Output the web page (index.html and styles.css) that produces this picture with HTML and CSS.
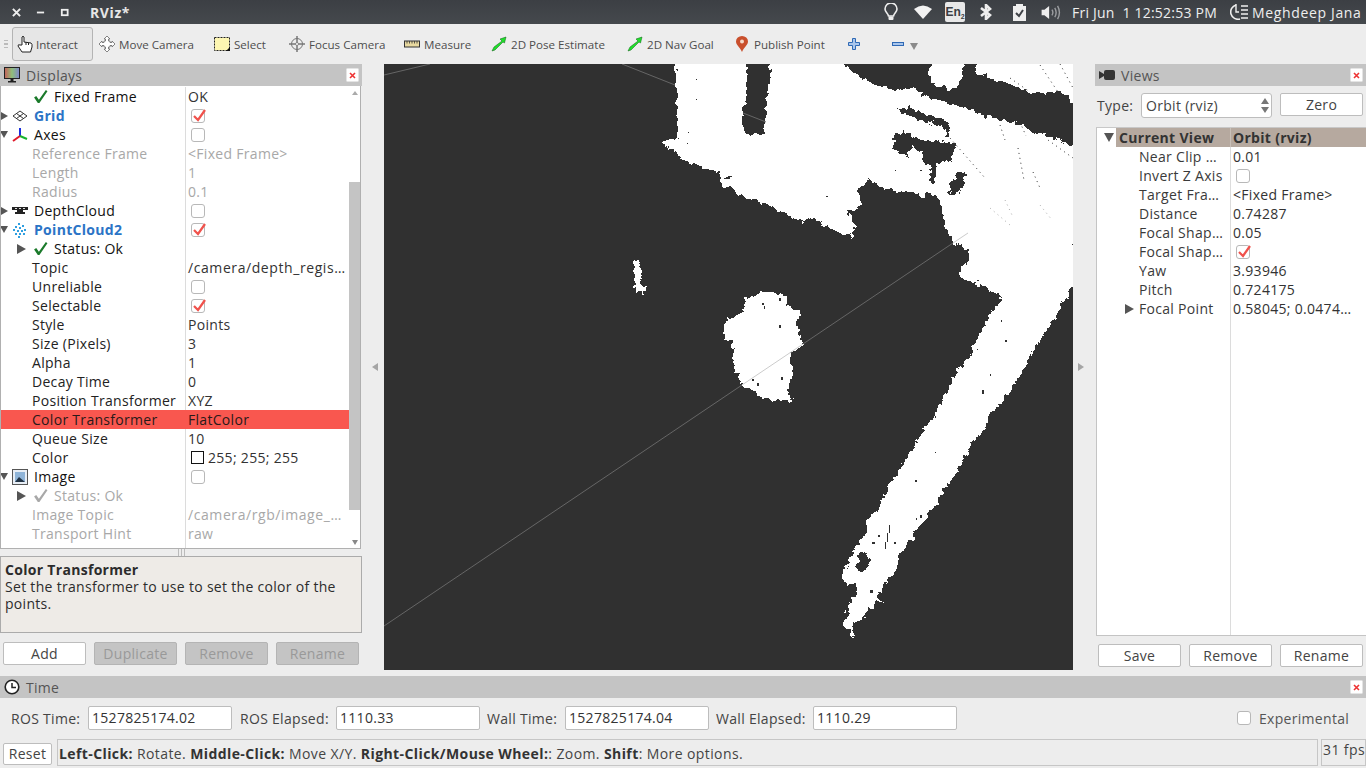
FILE: index.html
```html
<!DOCTYPE html>
<html lang="en">
<head>
<meta charset="utf-8">
<title>RViz*</title>
<link rel="stylesheet" href="styles.css">
</head>
<body>
<svg class="defs" aria-hidden="true">
  <symbol id="check" viewBox="0 0 14 14"><path d="M1 8 L3 6.5 L5.5 10 L12 1 L13.5 2 L6 13 L4.5 13 Z" fill="currentColor"/></symbol>
  <symbol id="redcheck" viewBox="0 0 14 14"><path d="M2 7 L6 11 L13 1" fill="none" stroke="#f0524c" stroke-width="2.2"/></symbol>
  <symbol id="arrow2" viewBox="0 0 16 16"><path d="M1 15 L3 11 L11 5 L9 3 L15 1 L13.5 7 L12 6 L4 14 Z" fill="#1fe02a" stroke="#0c5f14" stroke-width=".5"/></symbol>
  <symbol id="closex" viewBox="0 0 13 14"><rect x=".5" y=".5" width="12" height="13" rx="1" fill="#fff" stroke="#e4e4e4"/><path d="M4 5 L9 10 M9 5 L4 10" stroke="#e33" stroke-width="1.6"/></symbol>
</svg>

<header class="topbar">
  <div class="wm">
    <svg class="wm-i" viewBox="0 0 10 10"><path d="M1 1 L9 9 M9 1 L1 9" stroke="#eee" stroke-width="2.2"/></svg>
    <svg class="wm-i" viewBox="0 0 10 10"><path d="M1 5 H9" stroke="#eee" stroke-width="2"/></svg>
    <svg class="wm-i" viewBox="0 0 10 10"><rect x="2" y="2" width="6.500" height="6" fill="none" stroke="#eee" stroke-width="2"/></svg>
  </div>
  <div class="app-title">RViz*</div>
  <div class="tray">
    <svg class="t-bulb" viewBox="0 0 14 18"><path d="M4.500 13 C4 10 1 9 1 6 A6 6 0 0 1 13 6 C13 9 10 10 9.500 13 Z" fill="none" stroke="#eee" stroke-width="1.600"/><rect x="4.500" y="13.500" width="5" height="3.500" rx="1" fill="#eee"/></svg>
    <svg class="t-wifi" viewBox="0 0 18 14"><path d="M0 4 Q9 -3 18 4 L9 14 Z" fill="#f2f2f2"/></svg>
    <div class="t-en">En<sub>2</sub></div>
    <svg class="t-bt" viewBox="0 0 14 16"><path d="M2 4 L11 11 L7 15 V1 L11 5 L2 12" fill="none" stroke="#eee" stroke-width="2.600"/></svg>
    <svg class="t-clip" viewBox="0 0 13 18"><path d="M0 3 H3 V1 H10 V3 H13 V18 H0 Z" fill="#eee"/><path d="M3 10 L6 13 L10 7" fill="none" stroke="#3f4247" stroke-width="2"/></svg>
    <svg class="t-vol" viewBox="0 0 20 16"><path d="M0 5 H3 L8 1 V15 L3 11 H0 Z" fill="#eee"/><path d="M11 5 Q13 8 11 11 M14 3 Q17 8 14 13 M17 1 Q21 8 17 15" fill="none" stroke="#9b9da0" stroke-width="1.500"/></svg>
    <div class="t-clock">Fri Jun&nbsp;&nbsp;1 12:52:53 PM</div>
    <svg class="t-sess" viewBox="0 0 18 16"><path d="M6 1 A7 7 0 1 0 10 15" fill="none" stroke="#eee" stroke-width="1.600"/><path d="M6 0 V8 H9 M11 2 H18 M11 6 H18 M11 10 H18 M11 14 H18" fill="none" stroke="#eee" stroke-width="1.400"/></svg>
    <div class="t-user">Meghdeep Jana</div>
  </div>
</header>

<nav class="toolbar">
  <div class="grip"></div>
  <div class="tool active">
    <svg class="ti-hand" viewBox="0 0 16 18"><path d="M5 10 V2 Q6 .5 7 2 V7 L14 8 Q15.500 9 15 12 L13.500 17 H5 L1 11 Q1 9 3 10 Z" fill="#fff" stroke="#222" stroke-width="1"/><path d="M9 7 V10 M11.500 8 V10" stroke="#222"/></svg>
    <span>Interact</span>
  </div>
  <div class="tool wide-pad">
    <svg class="ti" viewBox="0 0 16 16"><path d="M8 0 L11 3 H9.500 V5 H11 V6.500 H13 V5 L16 8 L13 11 V9.500 H11 V11 H9.500 V13 H11 L8 16 L5 13 H6.500 V11 H5 V9.500 H3 V11 L0 8 L3 5 V6.500 H5 V5 H6.500 V3 H5 Z" fill="#fff" stroke="#666" stroke-width=".8"/></svg>
    <span>Move Camera</span>
  </div>
  <div class="tool">
    <svg class="ti" viewBox="0 0 16 14"><rect x=".5" y=".5" width="15" height="13" fill="#fdf6b2" stroke="#222" stroke-dasharray="2 1"/><path d="M12 14 L16 10 V14 Z" fill="#111"/></svg>
    <span>Select</span>
  </div>
  <div class="tool wide-pad">
    <svg class="ti" viewBox="0 0 16 16"><circle cx="8" cy="8" r="5.500" fill="#eee" stroke="#777"/><path d="M8 0 V16 M0 8 H16" stroke="#777" stroke-width="1.500"/><circle cx="8" cy="8" r="1.500" fill="#fff" stroke="#777" stroke-width=".8"/></svg>
    <span>Focus Camera</span>
  </div>
  <div class="tool">
    <svg class="ti" viewBox="0 0 16 8"><rect x=".5" y="1" width="15" height="6" fill="#e8d9a0" stroke="#333"/><path d="M3 1 V3.500 M5.500 1 V3.500 M8 1 V3.500 M10.500 1 V3.500 M13 1 V3.500" stroke="#333" stroke-width=".8"/></svg>
    <span>Measure</span>
  </div>
  <div class="tool"><svg class="ti"><use href="#arrow2"/></svg><span>2D Pose Estimate</span></div>
  <div class="tool"><svg class="ti"><use href="#arrow2"/></svg><span>2D Nav Goal</span></div>
  <div class="tool pub">
    <svg class="ti-pin" viewBox="0 0 12 16"><path d="M6 16 C4 11 0 9 0 5.500 A6 5.500 0 0 1 12 5.500 C12 9 8 11 6 16 Z" fill="#c94f2c"/><circle cx="6" cy="5.500" r="2" fill="#f5d9c8"/></svg>
    <span>Publish Point</span>
  </div>
  <div class="tool"><svg class="ti-pm" viewBox="0 0 12 12"><path d="M4.500 .5 H7.500 V4.500 H11.500 V7.500 H7.500 V11.500 H4.500 V7.500 H.5 V4.500 H4.500 Z" fill="#a9c6ec" stroke="#2f69b5"/></svg></div>
  <div class="tool minus">
    <svg class="ti-pm" viewBox="0 0 12 12"><rect x=".5" y="4.500" width="11" height="3" fill="#a9c6ec" stroke="#2f69b5"/></svg>
    <svg class="ti-down" viewBox="0 0 8 8"><path d="M0 1 H8 L4 8 Z" fill="#8a8a8a"/></svg>
  </div>
</nav>

<main class="work">
  <section class="left">
    <div class="dock-title">
      <svg class="di" viewBox="0 0 16 16"><defs><linearGradient id="scr" x1="0" x2="1"><stop offset="0" stop-color="#c8605a"/><stop offset=".5" stop-color="#8fbf7a"/><stop offset="1" stop-color="#7f86cc"/></linearGradient></defs><rect x=".5" y=".5" width="15" height="11" fill="url(#scr)" stroke="#222"/><path d="M6.500 12 H9.500 V14 H12 V15.500 H4 V14 H6.500 Z" fill="#222"/></svg>
      <span class="dock-name">Displays</span>
      <svg class="close"><use href="#closex"/></svg>
    </div>
    <div class="tree">
      <div class="rows">
        <div class="row"><div class="n l1"><svg class="chk ok"><use href="#check"/></svg><span>Fixed Frame</span></div><div class="v">OK</div></div>
        <div class="row"><div class="n l0"><i class="tri r"></i><svg class="ico" viewBox="0 0 16 12"><path d="M8 1 L15 6 L8 11 L1 6 Z M4.500 3.500 L11.500 8.500 M11.500 3.500 L4.500 8.500" fill="#fff" stroke="#333"/></svg><span class="blue">Grid</span></div><div class="v"><i class="cb"><svg><use href="#redcheck"/></svg></i></div></div>
        <div class="row"><div class="n l0"><i class="tri d"></i><svg class="ico" viewBox="0 0 16 16"><path d="M8 9 V1" stroke="#1a2fe0" stroke-width="2"/><path d="M8 9 L15 12" stroke="#16b52e" stroke-width="2"/><path d="M8 9 L1 14" stroke="#e01a2a" stroke-width="2"/></svg><span>Axes</span></div><div class="v"><i class="cb"></i></div></div>
        <div class="row off"><div class="n l2">Reference Frame</div><div class="v">&lt;Fixed Frame&gt;</div></div>
        <div class="row off"><div class="n l2">Length</div><div class="v">1</div></div>
        <div class="row off"><div class="n l2">Radius</div><div class="v">0.1</div></div>
        <div class="row"><div class="n l0"><i class="tri r"></i><svg class="ico" viewBox="0 0 16 10"><path d="M0 1 H16 V4 H11 V6 H13 V8 H3 V6 H5 V4 H0 Z" fill="#222"/><path d="M3 2.500 H5 M7 2.500 H9 M11 2.500 H13" stroke="#ddd"/></svg><span>DepthCloud</span></div><div class="v"><i class="cb"></i></div></div>
        <div class="row"><div class="n l0"><i class="tri d"></i><svg class="ico" viewBox="0 0 16 16"><path d="M6 1h2v2h-2z M10 3h2v2h-2z M3 4h2v2h-2z M7 5h2v2h-2z M12 7h2v2h-2z M1 7h2v2h-2z M5 8h2v2h-2z M9 8h2v2h-2z M3 11h2v2h-2z M7 11h2v2h-2z M11 11h2v2h-2z M6 14h2v2h-2z" fill="#2f9fe0"/></svg><span class="blue">PointCloud2</span></div><div class="v"><i class="cb"><svg><use href="#redcheck"/></svg></i></div></div>
        <div class="row"><div class="n l1 has"><i class="tri r2"></i><svg class="chk ok"><use href="#check"/></svg><span>Status: Ok</span></div><div class="v"></div></div>
        <div class="row"><div class="n l2">Topic</div><div class="v long">/camera/depth_regis…</div></div>
        <div class="row"><div class="n l2">Unreliable</div><div class="v"><i class="cb"></i></div></div>
        <div class="row"><div class="n l2">Selectable</div><div class="v"><i class="cb"><svg><use href="#redcheck"/></svg></i></div></div>
        <div class="row"><div class="n l2">Style</div><div class="v">Points</div></div>
        <div class="row"><div class="n l2">Size (Pixels)</div><div class="v">3</div></div>
        <div class="row"><div class="n l2">Alpha</div><div class="v">1</div></div>
        <div class="row"><div class="n l2">Decay Time</div><div class="v">0</div></div>
        <div class="row"><div class="n l2">Position Transformer</div><div class="v">XYZ</div></div>
        <div class="row sel"><div class="n l2">Color Transformer</div><div class="v">FlatColor</div></div>
        <div class="row"><div class="n l2">Queue Size</div><div class="v">10</div></div>
        <div class="row"><div class="n l2">Color</div><div class="v"><i class="swatch"></i>255; 255; 255</div></div>
        <div class="row"><div class="n l0"><i class="tri d"></i><svg class="ico" viewBox="0 0 16 16"><rect x=".5" y=".5" width="15" height="15" fill="#e8eef5" stroke="#555"/><rect x="3" y="3" width="10" height="10" fill="#8fb4d8"/><path d="M3 13 L7 8 L13 13 Z" fill="#234"/></svg><span>Image</span></div><div class="v"><i class="cb"></i></div></div>
        <div class="row off"><div class="n l1 has"><i class="tri r2 dark"></i><svg class="chk"><use href="#check"/></svg><span>Status: Ok</span></div><div class="v"></div></div>
        <div class="row off"><div class="n l2">Image Topic</div><div class="v long">/camera/rgb/image_…</div></div>
        <div class="row off"><div class="n l2">Transport Hint</div><div class="v">raw</div></div>
        <div class="row off"><div class="n l2">Queue Size</div><div class="v">2</div></div>
      </div>
      <div class="sbar">
        <i class="sb-up"></i>
        <div class="sb-thumb"></div>
        <i class="sb-dn"></i>
      </div>
    </div>
    <div class="handle"></div>
    <div class="desc">
      <b>Color Transformer</b>
      <p>Set the transformer to use to set the color of the points.</p>
    </div>
    <div class="btns">
      <button class="btn">Add</button>
      <button class="btn dis">Duplicate</button>
      <button class="btn dis">Remove</button>
      <button class="btn dis">Rename</button>
    </div>
  </section>

  <div class="split"><i class="sp-l"></i></div>

  <svg class="view" viewBox="384 64 689 606" aria-label="3D view">
    <defs>
      <filter id="rough" filterUnits="userSpaceOnUse" x="384" y="64" width="689" height="606" color-interpolation-filters="sRGB">
        <feTurbulence type="fractalNoise" baseFrequency="0.17" numOctaves="2" seed="4" result="n"/>
        <feDisplacementMap in="SourceGraphic" in2="n" scale="9" xChannelSelector="R" yChannelSelector="G"/>
      </filter>
    </defs>
    <rect x="384" y="64" width="689" height="606" fill="#303030"/>
    <g filter="url(#rough)" shape-rendering="crispEdges">
      <path fill="#fff" d="M675 60 L677 100 L677 138 L664 141 L663 146 L675 150 L680 158 L700 166 L720 173 L722 187 L730 187 L740 195 L763 203 L785 214 L802 222 L813 218 L837 232 L853 236 L854 220 L847 213 L862 205 L858 188 L870 179 L877 185 L895 192 L915 192 L922 198 L930 192 L940 203 L945 227 L953 242 L965 250 L969 254 L959 277 L977 283 L1003 297 L997 303 L980 333 L967 360 L953 377 L947 393 L933 417 L923 430 L907 457 L895 477 L885 493 L877 510 L868 520 L865 537 L858 543 L848 562 L843 577 L848 586 L857 582 L855 595 L847 608 L848 615 L843 628 L849 629 L853 639 L853 623 L868 615 L870 608 L875 600 L883 605 L878 597 L883 587 L897 570 L898 557 L913 537 L930 510 L937 505 L945 488 L958 470 L972 443 L983 430 L993 410 L1002 403 L1012 387 L1020 375 L1032 352 L1047 330 L1058 312 L1076 280 L1076 148 L1053 138 L1028 130 L1023 125 L997 120 L970 110 L948 103 L933 98 L917 93 L912 88 L897 91 L873 83 L853 72 L838 60 Z"/>
      <path fill="#fff" d="M928 73 L933 60 L965 60 L960 80 L955 89 L937 86 L932 80 Z"/>
      <path fill="#fff" d="M975 70 L978 60 L1076 60 L1076 108 L1063 93 L1027 92 L1013 85 L982 75 Z"/>
      <path fill="#fff" d="M632 267 L635 259 L638 260 L643 270 L640 282 L646 287 L645 294 L635 292 L635 277 Z"/>
      <path fill="#fff" d="M725 320 L743 313 L745 298 L763 292 L787 295 L788 307 L800 310 L798 325 L800 340 L805 343 L800 348 L790 353 L792 377 L788 395 L793 400 L775 401 L757 395 L743 385 L735 373 L732 343 L725 338 Z"/>
      <path fill="#303030" d="M746 60 L747 83 L745 103 L742 118 L745 132 L752 135 L763 134 L767 117 L766 103 L770 83 L770 60 Z"/>
      <path fill="#303030" d="M893 148 L895 135 L903 132 L923 140 L957 143 L953 157 L950 162 L938 163 L935 183 L930 185 L930 165 L922 160 L922 153 L913 147 L907 150 L907 158 L900 153 Z"/>
      <path fill="#303030" d="M958 172 L965 172 L965 180 L957 195 L947 193 L950 183 Z"/>
      <path fill="#303030" d="M895 108 L907 107 L922 113 L943 120 L950 125 L948 140 L945 127 L920 120 L907 115 Z"/>
      <path fill="#303030" d="M724 176 L731 176 L728 181 Z"/>
      <path fill="#303030" d="M860 553 L868 552 L870 558 L866 570 L858 573 L857 565 Z"/>
    </g>
    <g class="speck">
      <path d="M696 99h1v1h-1z M696 79h1v1h-1z M688 132h1v1h-1z M687 143h1v1h-1z M826 196h2v1h-2z M762 303h2v2h-2z M779 298h2v3h-2z M764 306h1v3h-1z M779 325h2v3h-2z M752 379h2v2h-2z M757 383h2v3h-2z M781 377h2v3h-2z M1001 320h1v2h-1z M1005 340h2v2h-2z M977 349h1v1h-1z M990 374h1v2h-1z M982 390h2v4h-2z M935 416h1v2h-1z M935 452h1v1h-1z M915 480h2v2h-2z M920 515h2v3h-2z M916 518h1v2h-1z M889 525h1v8h-1z M887 533h1v9h-1z M885 542h1v7h-1z M872 542h3v2h-3z M894 542h2v2h-2z M878 535h2v2h-2z M870 590h3v3h-3z M862 617h2v2h-2z M855 625h1v4h-1z M895 170h1v1h-1z M920 170h2v1h-2z M955 175h1v1h-1z"/>
      <path class="dots" d="M1010 78 L1030 92 M1040 65 L1058 92 M1060 64 L1073 88 M1048 140 L1073 158 M1020 122 L1026 136 M1000 125 L1005 140 M1018 148 L1024 180 M1033 172 L1040 188 M950 138 L985 178"/>
      <path class="dots soft" d="M1005 200 L1012 215 M1040 205 L1052 220 M990 208 L1010 225"/>
    </g>
    <path class="gl" d="M384 626 L742 385 M803 344 L953 243 M622 64 L675 85 M743 113 L766 122 M384 75 L430 64"/>
    <path class="gl lt" d="M742 385 L803 344 M953 243 L968 233"/>
  </svg>

  <div class="split"><i class="sp-r"></i></div>

  <section class="right">
    <div class="dock-title">
      <svg class="di" viewBox="0 0 16 10"><path d="M0 1 L5 4 V2 Q5 0 7 0 H14 Q16 0 16 2 V8 Q16 10 14 10 H7 Q5 10 5 8 V6 L0 9 Z" fill="#333"/></svg>
      <span class="dock-name">Views</span>
      <svg class="close"><use href="#closex"/></svg>
    </div>
    <div class="type-row">
      <span class="type-l">Type:</span>
      <div class="combo"><span>Orbit (rviz)</span><svg class="spin" viewBox="0 0 8 15"><path d="M4 0 L8 6 H0 Z M0 9 H8 L4 15 Z" fill="#777"/></svg></div>
      <button class="btn zero">Zero</button>
    </div>
    <div class="vtree">
      <div class="vhead"><i class="tri vd"></i><div class="vh-n">Current View</div><div class="vh-v">Orbit (rviz)</div></div>
      <div class="vrow"><div class="vn">Near Clip …</div><div class="v">0.01</div></div>
      <div class="vrow"><div class="vn">Invert Z Axis</div><div class="v"><i class="cb"></i></div></div>
      <div class="vrow"><div class="vn">Target Fra…</div><div class="v">&lt;Fixed Frame&gt;</div></div>
      <div class="vrow"><div class="vn">Distance</div><div class="v">0.74287</div></div>
      <div class="vrow"><div class="vn">Focal Shap…</div><div class="v">0.05</div></div>
      <div class="vrow"><div class="vn">Focal Shap…</div><div class="v"><i class="cb"><svg><use href="#redcheck"/></svg></i></div></div>
      <div class="vrow"><div class="vn">Yaw</div><div class="v">3.93946</div></div>
      <div class="vrow"><div class="vn">Pitch</div><div class="v">0.724175</div></div>
      <div class="vrow"><div class="vn fp"><i class="tri r3"></i>Focal Point</div><div class="v">0.58045; 0.0474…</div></div>
      <div class="vfill"></div>
    </div>
    <div class="btns rb">
      <button class="btn">Save</button>
      <button class="btn">Remove</button>
      <button class="btn">Rename</button>
    </div>
  </section>
</main>

<section class="time">
  <div class="dock-title wide">
    <svg class="di" viewBox="0 0 16 16"><circle cx="8" cy="8" r="6.800" fill="#fff" stroke="#222" stroke-width="1.600"/><path d="M8 4 V8.500 H12" fill="none" stroke="#222" stroke-width="1.500"/></svg>
    <span class="dock-name">Time</span>
    <svg class="close"><use href="#closex"/></svg>
  </div>
  <div class="time-row">
    <label class="tl tl1">ROS Time:</label><div class="inp">1527825174.02</div>
    <label class="tl tl2">ROS Elapsed:</label><div class="inp">1110.33</div>
    <label class="tl tl3">Wall Time:</label><div class="inp">1527825174.04</div>
    <label class="tl tl4">Wall Elapsed:</label><div class="inp">1110.29</div>
    <i class="cb exp-cb"></i><span class="exp-l">Experimental</span>
  </div>
</section>

<footer class="status">
  <button class="btn reset">Reset</button>
  <div class="msg"><b>Left-Click:</b> Rotate. <b>Middle-Click:</b> Move X/Y. <b>Right-Click/Mouse Wheel:</b>: Zoom. <b>Shift</b>: More options.</div>
  <div class="fps">31 fps</div>
</footer>
</body>
</html>
```

FILE: styles.css
```css
* { box-sizing: border-box; }
html, body { margin: 0; padding: 0; }
body {
  width: 1366px; height: 768px; overflow: hidden;
  display: flex; flex-direction: column;
  background: #ededed; color: #333;
  font: 14px/19px "Open Sans", "Noto Sans", sans-serif;
  letter-spacing: .3px;
}
.defs { display: none; }
i { display: block; font-style: normal; }

/* top bar */
.topbar {
  height: 24px; flex: none; display: flex; align-items: center;
  background: linear-gradient(#3c3f44, #45494d); color: #eee;
}
.wm { width: 90px; display: flex; align-items: center; padding-left: 12px; gap: 15px; }
.wm-i { width: 9px; height: 9px; flex: none; }
.app-title { font-weight: 700; color: #e6e6e6; letter-spacing: .6px; }
.tray { margin-left: auto; display: flex; align-items: center; height: 24px; }
.t-bulb { width: 14px; height: 18px; margin-right: 16px; }
.t-wifi { width: 18px; height: 14px; margin-right: 13px; }
.t-en { width: 20px; height: 20px; background: #e8e8e8; color: #3a3d42; border-radius: 2px; font: 700 12px/20px "Liberation Sans", sans-serif; letter-spacing: 0; text-align: center; margin-right: 14px; }
.t-en sub { font-size: 7px; line-height: 0; }
.t-bt { width: 14px; height: 16px; margin-right: 20px; }
.t-clip { width: 13px; height: 18px; margin-right: 15px; }
.t-vol { width: 20px; height: 15px; margin-right: 11px; }
.t-clock { width: 158px; white-space: nowrap; color: #eee; letter-spacing: .23px; }
.t-sess { width: 18px; height: 16px; margin-right: 4px; }
.t-user { width: 114px; white-space: nowrap; color: #eee; letter-spacing: .65px; }

/* toolbar */
.toolbar {
  height: 40px; flex: none; display: grid; align-items: center;
  grid-template-columns: 12px 81px 116px 74px 116px 87px 136px 109px 112px 44px 1fr;
  font-size: 11.6px; letter-spacing: 0; color: #4d4d4d;
}
.grip { width: 4px; height: 8px; margin-left: 4px; border-top: 1px solid #bbb; border-bottom: 1px solid #bbb; background: linear-gradient(#ededed 40%, #bbb 40%, #bbb 60%, #ededed 60%); }
.tool { display: flex; align-items: center; height: 34px; padding-left: 5px; gap: 4px; white-space: nowrap; }
.tool.wide-pad { padding-left: 6px; }
.tool.active { background: #e6e6e6; border: 1px solid #b4b4b4; border-radius: 3px; padding-left: 4px; gap: 3px; }
.ti { width: 16px; height: 16px; flex: none; }
.ti-hand { width: 16px; height: 18px; flex: none; }
.tool.pub { gap: 6px; }
.ti-pin { width: 12px; height: 16px; flex: none; }
.ti-pm { width: 12px; height: 12px; flex: none; }
.minus { gap: 6px; }
.ti-down { width: 8px; height: 8px; flex: none; margin-top: 4px; }

/* main */
.work { flex: none; height: 612px; display: grid; grid-template-columns: 362px 22px 689px 22px 271px; align-items: start; }
.left { display: flex; flex-direction: column; height: 612px; }
.right { display: flex; flex-direction: column; height: 612px; }
.dock-title { height: 22px; flex: none; display: flex; align-items: center; background: #c4c4c4; padding: 0 3px 0 4px; }
.dock-name { color: #555; font-size: 14px; margin-left: 6px; }
.di { width: 16px; height: 16px; flex: none; }
.close { width: 13px; height: 14px; margin-left: auto; flex: none; }

.tree { height: 463px; display: flex; border: 1px solid #b0b0b0; border-top: 0; background: #fff; overflow: hidden; flex: none; width: 361px; padding-top: 1px; }
.rows { width: 348px; flex: none; }
.row { height: 19px; display: flex; color: #111; }
.n { width: 185px; flex: none; border-right: 1px solid #dcdcdc; display: flex; align-items: center; white-space: nowrap; }
.v { padding-left: 2px; flex: 1; white-space: nowrap; overflow: hidden; color: #333; display: flex; align-items: center; }
.v.long { letter-spacing: .58px; }
.l0 { padding-left: 0; }
.l1 { padding-left: 32px; }
.l1.has { padding-left: 16px; }
.l2 { padding-left: 31px; color: #222; }
.off .n, .off .v { color: #a8a8a8; }
.sel { background: #f9574f; }
.sel .n, .sel .v { color: #2a1a1a; border-color: #f9574f; }
.blue { color: #2b74c6; font-weight: 700; }
.ico { width: 16px; height: 16px; flex: none; margin: 0 6px 0 3px; }
.chk { width: 15px; height: 15px; flex: none; margin-right: 6px; color: #a8a8a8; }
.chk.ok { color: #1b7a2b; }
.tri { width: 0; height: 0; flex: none; }
.tri.r { border: 4px solid transparent; border-left: 7px solid #555; border-right: 0; margin-right: 1px; }
.tri.d { border: 4px solid transparent; border-top: 7px solid #555; border-bottom: 0; transform: translate(-1px, 0); }
.tri.r2 { border: 5px solid transparent; border-left: 9px solid #555; border-right: 0; margin-right: 7px; }
.tri.r3 { border: 5px solid transparent; border-left: 9px solid #555; border-right: 0; margin-right: 5px; }
.cb { width: 14px; height: 14px; margin-left: 3px; background: #fff; border: 1px solid #b8b8b8; border-radius: 3px; flex: none; }
.cb svg { width: 14px; height: 14px; display: block; margin: -1px 0 0 0; }
.swatch { width: 13px; height: 13px; background: #fff; border: 1px solid #111; margin: 0 4px 0 3px; flex: none; }

.sbar { width: 12px; flex: none; background: #fff; display: flex; flex-direction: column; align-items: stretch; }
.sb-up { height: 95px; }
.sb-up::before { content: ""; display: block; margin: 4px 0 0 3px; width: 0; border: 3px solid transparent; border-bottom: 4px solid #aaa; border-top: 0; }
.sb-thumb { height: 328px; background: #c4c4c4; }
.sb-dn { flex: 1; }
.sb-dn::before { content: ""; display: block; margin: 30px 0 0 3px; width: 0; border: 3px solid transparent; border-top: 5px solid #888; border-bottom: 0; }

.handle { height: 7px; flex: none; background: linear-gradient(90deg, transparent 178px, #bbb 178px, #bbb 179px, transparent 179px, transparent 181px, #bbb 181px, #bbb 182px, transparent 182px, transparent 184px, #bbb 184px, #bbb 185px, transparent 185px); }
.desc { height: 77px; flex: none; width: 362px; background: #eeebe7; border: 1px solid #ababab; padding: 4px 4px; line-height: 17px; color: #2c2c2c; font-size: 14px; }
.desc b { display: block; }
.desc p { margin: 0; }
.btns { display: flex; gap: 8px; padding: 9px 0 0 3px; flex: none; }
.btn { width: 83px; height: 23px; padding: 0; font: inherit; letter-spacing: .3px; line-height: 19px; background: #fff; color: #444; border: 1px solid #bdbdbd; border-radius: 2px; }
.btn.dis { background: #c4c4c4; color: #999; border-color: #b4b4b4; }

.split { height: 606px; display: flex; align-items: center; justify-content: center; }
.sp-l { width: 0; border: 4px solid transparent; border-right: 6px solid #a5a5a5; border-left: 0; margin-left: 3px; }
.sp-r { width: 0; border: 4px solid transparent; border-left: 6px solid #a5a5a5; border-right: 0; margin-right: 6px; }
.view { width: 689px; height: 606px; display: block; }
.speck { fill: #303030; }
.dots { fill: none; stroke: #303030; stroke-width: 1; stroke-dasharray: 1 4; }
.dots.soft { stroke: #aaa; }
.gl { fill: none; stroke: #666; stroke-width: 1; }
.gl.lt { stroke: #ccc; }

/* views */
.type-row { height: 41px; flex: none; display: flex; align-items: flex-start; padding: 7px 3px 0 2px; }
.type-l { width: 44px; line-height: 25px; color: #444; }
.combo { width: 131px; height: 25px; background: #fff; border: 1px solid #bdbdbd; border-radius: 3px; padding: 0 2px 0 4px; line-height: 23px; color: #444; display: flex; justify-content: space-between; align-items: center; }
.spin { width: 8px; height: 15px; flex: none; }
.zero { margin-left: 8px; height: 23px; }
.vtree { height: 509px; flex: none; width: 271px; margin-left: 1px; border: 1px solid #c4c4c4; border-top-color: #c8c8c8; background: #fff; display: flex; flex-direction: column; }
.vhead { height: 19px; display: flex; align-items: center; background: linear-gradient(90deg, #fff 19px, #b6a99f 19px); font-weight: 700; color: #333; flex: none; }
.tri.vd { border: 5px solid transparent; border-top: 9px solid #555; border-bottom: 0; margin-left: 7px; margin-right: 5px; }
.vh-n { width: 112px; border-right: 1px solid #c9c0b8; }
.vh-v { padding-left: 2px; }
.vrow { height: 19px; display: flex; flex: none; color: #333; }
.vn { width: 134px; flex: none; padding-left: 42px; border-right: 1px solid #dcdcdc; white-space: nowrap; overflow: hidden; display: flex; align-items: center; color: #3a3a3a; }
.vn.fp { padding-left: 28px; }
.vfill { flex: 1; margin-left: 133px; border-left: 1px solid #dcdcdc; }
.rb { padding: 8px 0 0 3px; }

/* time */
.time { flex: none; height: 62px; }
.dock-title.wide { width: 100%; }
.time-row { height: 40px; display: flex; align-items: center; color: #444; }
.tl { white-space: nowrap; flex: none; }
.tl1 { width: 88px; padding-left: 11px; }
.tl2 { width: 104px; padding-left: 8px; }
.tl3 { width: 85px; padding-left: 7px; }
.tl4 { width: 104px; padding-left: 7px; }
.inp { width: 144px; height: 24px; background: #fff; border: 1px solid #bdbdbd; border-radius: 2px; padding: 0 3px; line-height: 22px; color: #333; flex: none; }
.exp-cb { margin-left: auto; margin-right: 8px; }
.exp-l { width: 107px; white-space: nowrap; flex: none; color: #555; }

/* status */
.status { flex: 1; display: flex; align-items: stretch; padding: 1px 0 2px 0; letter-spacing: .4px; }
.reset { width: 49px; height: 22px; margin: 4px 5px 0 3px; padding-bottom: 2px; flex: none; color: #444; }
.msg { width: 1261px; flex: none; border: 1px solid #c6c6c6; padding: 4px 1px 0; color: #444; white-space: nowrap; }
.msg b { color: #333; }
.fps { margin-left: 3px; flex: 1; border: 1px solid #c6c6c6; padding: 0 0 0 1px; white-space: nowrap; color: #444; overflow: hidden; }
```
